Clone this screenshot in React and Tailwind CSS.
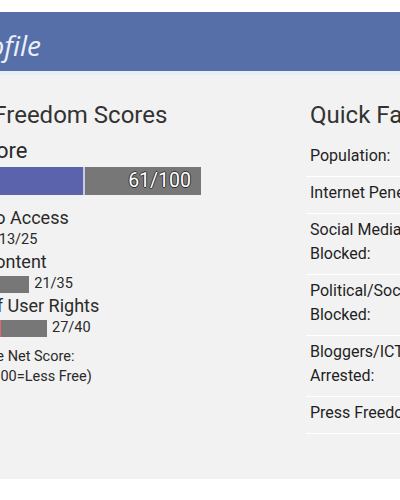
import React from "react";

const categories = [
  { label: "Obstacles to Access", score: 13, max: 25, cls: "mt-[12px]" },
  { label: "Limits on Content", score: 21, max: 35, cls: "mt-[2px]" },
  { label: "Violations of User Rights", score: 27, max: 40, cls: "mt-[2px]", labelCls: "ml-[-3px]" },
];

const facts = [
  ["Population:"],
  ["Internet Penetration:"],
  ["Social Media/ICT Apps", "Blocked:"],
  ["Political/Social Content", "Blocked:"],
  ["Bloggers/ICT Users", "Arrested:"],
  ["Press Freedom Status:"],
];

const PX = 3.55;

function ScoreRow({ label, score, max, cls, labelCls = "" }) {
  return (
    <div className={cls}>
      <div className={`text-[18px] leading-[22px] text-[#2a2a2a] whitespace-nowrap ${labelCls}`}>{label}</div>
      <div className="mt-[2px] h-[18px] flex items-center">
        {/* bar width follows the max points of the category */}
        <div className="h-[17px] flex bg-[#777777]" style={{ width: max * PX }}>
          <div className="h-full bg-[#e2666e]" style={{ width: score * PX }} />
        </div>
        <span className="ml-[5px] text-[14.5px] leading-[18px] text-[#2a2a2a]">
          {score}/{max}
        </span>
      </div>
    </div>
  );
}

export default function App() {
  return (
    <div className="w-[400px] h-[500px] bg-white overflow-hidden font-['Roboto',sans-serif]">
      <div className="h-[12px]" />

      {/* Title bar */}
      <div className="h-[59px] bg-[#566fa9] flex items-center">
        <div className="w-[41px] flex justify-end">
          <span className="whitespace-nowrap italic text-[28px] leading-none pt-[6px] text-[#eaf0fa] font-['Open_Sans',sans-serif]">
            Country Profile
          </span>
        </div>
      </div>
      <div className="h-[4px] bg-[#e6eef8]" />

      {/* Panel */}
      <div className="h-[404px] bg-[#f2f2f2] flex pt-[26px]">
        {/* Scores */}
        <div className="ml-[-95px] w-[296px] shrink-0">
          <h2 className="text-[24px] leading-[28px] text-[#333] whitespace-nowrap">
            Internet Freedom Scores
          </h2>
          <div className="mt-[9px] ml-[-6px] text-[22px] leading-[26px] text-[#2a2a2a]">Overall Score</div>
          <div className="mt-[3px] h-[28px] flex">
            <div className="w-[180px] h-full bg-[#5a63ab] border-r-2 border-[#c9cbe0]" />
            <div className="flex-1 h-full bg-[#777777] flex items-center justify-end pr-[10px]">
              <span className="text-[19.5px] leading-none text-white [text-shadow:-1px_0_#333,1px_0_#333,0_1px_#333,0_-1px_#333]">
                61/100
              </span>
            </div>
          </div>

          {categories.map((c) => (
            <ScoreRow key={c.label} {...c} />
          ))}

          <div className="mt-[10px] text-[14.5px] leading-[20px] text-[#2a2a2a] whitespace-nowrap">
            <div className="ml-[-2px]">Freedom on the Net Score:</div>
            <div className="ml-[-5px]">(0=Most Free, 100=Less Free)</div>
          </div>
        </div>

        {/* Quick facts */}
        <div className="ml-[105px] flex-1 min-w-0">
          <h2 className="pl-[4px] text-[24px] leading-[28px] text-[#333] whitespace-nowrap">
            Quick Facts
          </h2>
          <div className="mt-[11px]">
            {facts.map((lines, i) => (
              <div
                key={i}
                className="pl-[4px] pt-[4px] pb-[8px] border-b border-white text-[16px] leading-[24px] text-[#1f1f1f] whitespace-nowrap"
              >
                {lines.map((l) => (
                  <div key={l}>{l}</div>
                ))}
              </div>
            ))}
          </div>
        </div>
      </div>
    </div>
  );
}
